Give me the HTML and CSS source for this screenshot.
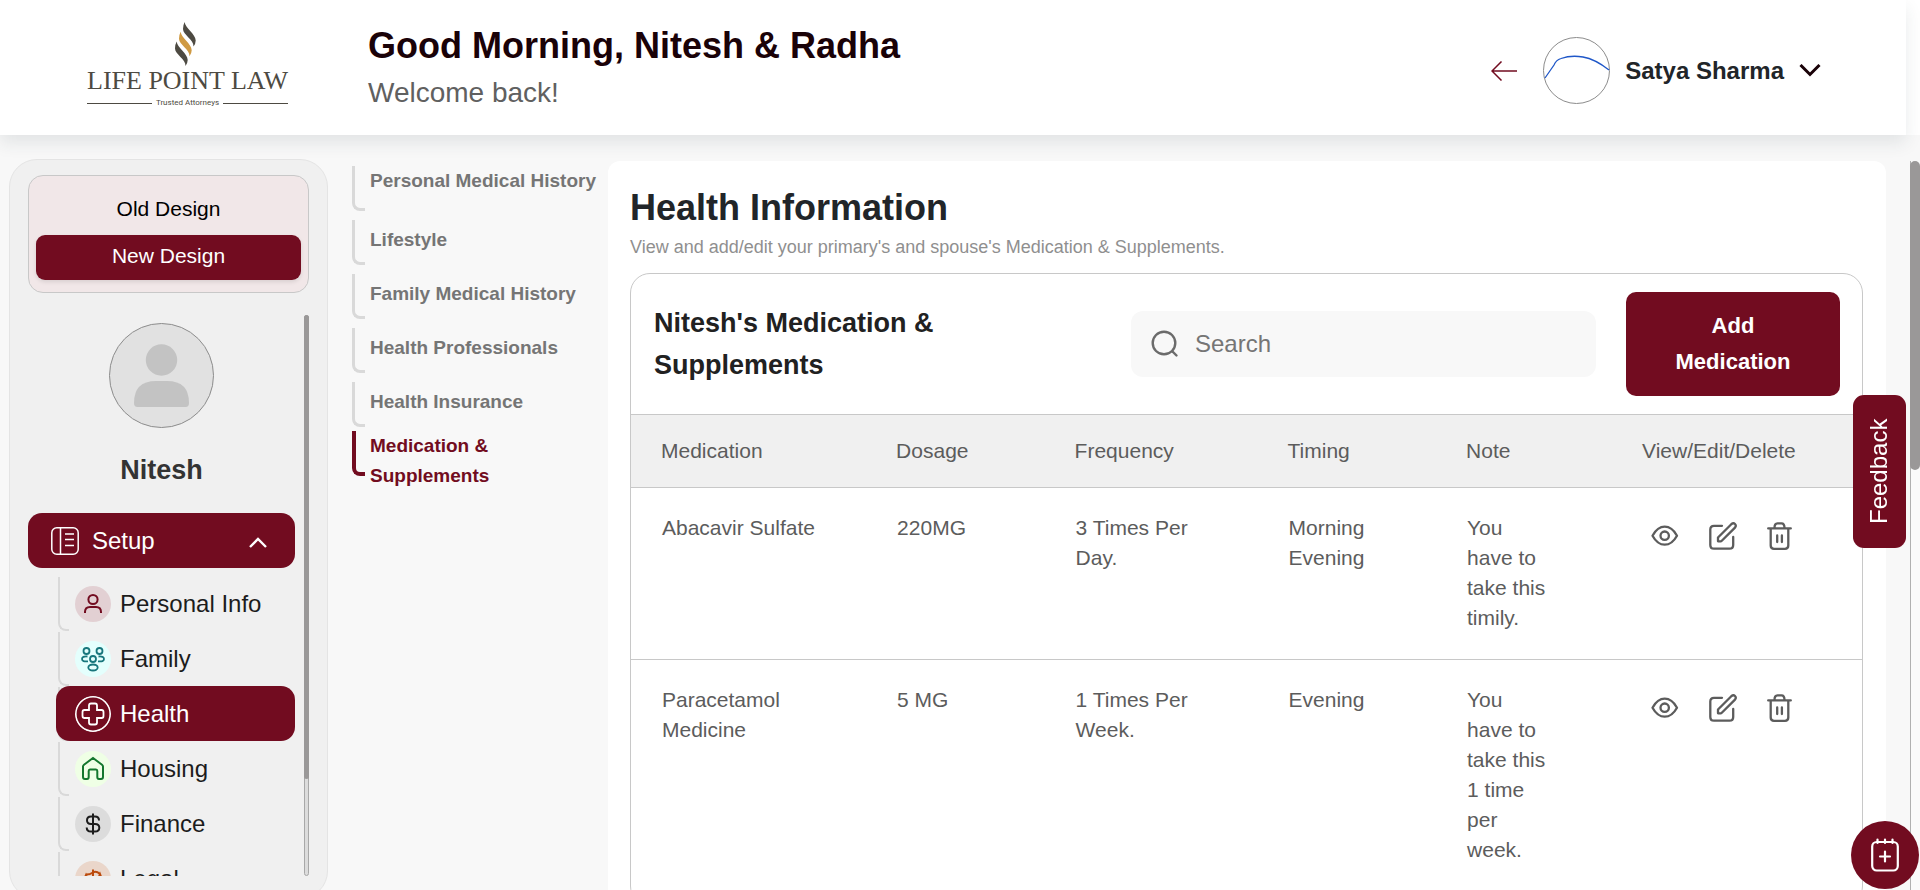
FILE: index.html
```html
<!DOCTYPE html>
<html lang="en">
<head>
<meta charset="utf-8">
<title>Health Information</title>
<link rel="stylesheet" href="styles.css">
</head>
<body>
<svg class="sprite" aria-hidden="true">
  <symbol id="eye" viewBox="0 0 28 28"><path d="M1.500 13.700C5 7.500 9.500 4.700 13.700 4.700S22.500 7.500 26 13.700C22.500 20 18 22.700 13.700 22.700S5 20 1.500 13.700Z"/><circle cx="13.700" cy="13.700" r="4.200"/></symbol>
  <symbol id="edit" viewBox="0 0 28 28"><path d="M13 3.800H5Q1.300 3.800 1.300 7.500V23Q1.300 26.700 5 26.700H20.500Q24.200 26.700 24.200 23V15"/><path d="M9 19.300V15.500L22.300 2.200Q24.400 .400 26 2T26 5.600L12.800 18.800Q12.300 19.300 11.600 19.300Z"/></symbol>
  <symbol id="trash" viewBox="0 0 28 28"><path d="M1.200 6.400H23.800M7.500 6Q7.500 1.300 10.500 1.300H14.500Q17.500 1.300 17.500 6M3.700 6.400V23.500Q3.700 26.800 7 26.800H18Q21.300 26.800 21.300 23.500V6.400M10.200 13.500V20M14.900 13.500V20"/></symbol>
</svg>

<header class="topbar">
  <a class="logo" href="#" aria-label="Life Point Law home">
    <svg class="logo-mark" viewBox="0 0 22 44" aria-hidden="true">
      <path fill="#4d4a42" d="M9.700 0C10 6 20.600 12 20.700 18.500Q20.700 21.500 18.500 24.500C19 17.500 8 13 8 7Q8 3 9.700 0Z"/>
      <path fill="#cf9a43" d="M5.700 9.700C6 15.700 16.600 21.700 16.700 28.200Q16.700 31.200 14.500 34.200C15 27.200 4 22.700 4 16.700Q4 12.700 5.700 9.700Z"/>
      <path fill="#4d4a42" d="M1.700 19.500C2 25.500 12.600 31.500 12.700 38Q12.700 41 10.500 44C11 37 0 32.500 0 26.500Q0 22.500 1.700 19.500Z"/>
    </svg>
    <span class="logo-name">LIFE POINT LAW</span>
    <span class="logo-tag">Trusted Attorneys</span>
  </a>
  <div class="greeting">
    <h1 class="greeting-title">Good Morning, Nitesh &amp; Radha</h1>
    <p class="greeting-text">Welcome back!</p>
  </div>
  <div class="account">
    <button class="plain" type="button" aria-label="Back">
      <svg width="26" height="20" viewBox="0 0 26 20" fill="none" stroke="#720c20" stroke-width="1.500"><path d="M26 10H1.500M10.500 .500L1 10L10.500 19.500"/></svg>
    </button>
    <button class="plain profile" type="button">
      <svg class="profile-photo" viewBox="0 0 67 67" aria-hidden="true"><circle cx="33.500" cy="33.500" r="33" fill="#fff" stroke="#8c8c8c"/><path d="M2 41L11 28Q13 23 18 21.500Q28 18 40 20T66 33" fill="none" stroke="#1f57c8" stroke-width="1.300"/></svg>
      <span class="profile-name">Satya Sharma</span>
      <svg width="22" height="13" viewBox="0 0 22 13" fill="none" stroke="#1a0208" stroke-width="3" aria-hidden="true"><path d="M1.500 1L11 10.500L20.500 1"/></svg>
    </button>
  </div>
</header>

<main class="layout">
  <aside class="sidebar">
    <div class="switch">
      <button class="switch-option" type="button">Old Design</button>
      <button class="switch-option is-on" type="button">New Design</button>
    </div>
    <div class="sidebar-scroll">
      <div class="sidebar-content">
        <svg class="avatar" viewBox="0 0 105 105" aria-hidden="true"><circle cx="52.500" cy="52.500" r="52" fill="#e1e1e1" stroke="#8c8c8c"/><circle cx="52.500" cy="37" r="15.700" fill="#c3c3c3"/><path d="M25 80Q25 58 47 58H58Q80 58 80 80Q80 84 76.500 84H28.500Q25 84 25 80Z" fill="#c3c3c3"/></svg>
        <p class="person">Nitesh</p>
        <button class="setup" type="button" aria-expanded="true">
          <svg width="28" height="28" viewBox="0 0 28 28" fill="none" stroke="#fff" stroke-width="1.500" aria-hidden="true"><rect x=".800" y=".800" width="26.400" height="26.400" rx="5"/><path d="M9.500 1V27M14 7H23M14 12.500H23M14 18.500H23"/></svg>
          <span>Setup</span>
          <svg class="setup-arrow" width="18" height="11" viewBox="0 0 18 11" fill="none" stroke="#fff" stroke-width="2.400" aria-hidden="true"><path d="M1 10L9 2L17 10"/></svg>
        </button>
        <nav>
          <ul class="menu">
            <li class="menu-item"><a class="menu-link" href="#"><svg class="menu-icon personal" viewBox="0 0 36 36" aria-hidden="true"><circle cx="18" cy="13.500" r="4.600"/><path d="M10 27V26Q10 21 15 21H21Q26 21 26 26V27"/></svg>Personal Info</a></li>
            <li class="menu-item"><a class="menu-link" href="#"><svg class="menu-icon family" viewBox="0 0 36 36" aria-hidden="true"><circle cx="11.500" cy="10" r="3"/><circle cx="24.500" cy="10" r="3"/><circle cx="18" cy="18" r="3"/><ellipse cx="18" cy="26.500" rx="4.700" ry="3"/><path d="M12.500 15.500Q7 15 7 18T13 20.300M23.500 15.500Q29 15 29 18T23 20.300"/></svg>Family</a></li>
            <li class="menu-item"><a class="menu-link is-current" href="#" aria-current="page"><svg class="menu-icon health" viewBox="0 0 36 36" aria-hidden="true"><circle cx="18" cy="18" r="17.300"/><path d="M16 7.500H20Q22 7.500 22 9.500V14H26.500Q28.500 14 28.500 16V20Q28.500 22 26.500 22H22V26.500Q22 28.500 20 28.500H16Q14 28.500 14 26.500V22H9.500Q7.500 22 7.500 20V16Q7.500 14 9.500 14H14V9.500Q14 7.500 16 7.500Z"/></svg>Health</a></li>
            <li class="menu-item"><a class="menu-link" href="#"><svg class="menu-icon housing" viewBox="0 0 36 36" aria-hidden="true"><path d="M8 15.500Q8 14.500 9 13.700L18 7L27 13.700Q28 14.500 28 15.500V26Q28 28 26 28H24Q22.300 28 22.300 26V20Q22.300 18.500 21 18.500H15Q13.700 18.500 13.700 20V26Q13.700 28 12 28H10Q8 28 8 26Z"/></svg>Housing</a></li>
            <li class="menu-item"><a class="menu-link" href="#"><svg class="menu-icon finance" viewBox="0 0 36 36" aria-hidden="true"><path d="M18 7.500V28.500M24 14.500Q24 10.500 20 10.500H16Q12 10.500 12 14.200T16 18H20Q24.300 18 24.300 21.800T20 25.600H16Q11.700 25.600 11.700 21.500"/></svg>Finance</a></li>
            <li class="menu-item"><a class="menu-link" href="#"><svg class="menu-icon legal" viewBox="0 0 36 36" aria-hidden="true"><path d="M18 8.500V27M11 13.500Q15 13.500 18 11.500T25 13M12 27H24M8 21L11 14L14 21ZM22 21L25 13L28 21Z"/></svg>Legal</a></li>
          </ul>
        </nav>
      </div>
      <div class="rail"><div class="rail-thumb"></div></div>
    </div>
  </aside>

  <nav class="sections" aria-label="Health sections">
    <ul class="section-list">
      <li class="section first"><a class="section-link" href="#">Personal Medical History</a></li>
      <li class="section"><a class="section-link" href="#">Lifestyle</a></li>
      <li class="section"><a class="section-link" href="#">Family Medical History</a></li>
      <li class="section"><a class="section-link" href="#">Health Professionals</a></li>
      <li class="section short"><a class="section-link" href="#">Health Insurance</a></li>
      <li class="section is-open"><a class="section-link" href="#" aria-current="page">Medication &amp;<br>Supplements</a></li>
    </ul>
  </nav>

  <section class="panel">
    <h2 class="panel-title">Health Information</h2>
    <p class="panel-text">View and add/edit your primary's and spouse's Medication &amp; Supplements.</p>
    <div class="card">
      <div class="card-head">
        <h3 class="card-title">Nitesh's Medication &amp; Supplements</h3>
        <label class="search">
          <svg width="28" height="28" viewBox="0 0 28 28" fill="none" stroke="#6b6b6b" stroke-width="2.400" stroke-linecap="round" aria-hidden="true"><circle cx="13" cy="13" r="11.300"/><path d="M21.500 21.500L25.500 25.500"/></svg>
          <input class="search-input" type="text" placeholder="Search" aria-label="Search">
        </label>
        <button class="add" type="button">Add Medication</button>
      </div>
      <table class="meds">
        <colgroup><col class="c-name"><col class="c-dose"><col class="c-freq"><col class="c-time"><col class="c-note"><col></colgroup>
        <thead><tr><th>Medication</th><th>Dosage</th><th>Frequency</th><th>Timing</th><th>Note</th><th>View/Edit/Delete</th></tr></thead>
        <tbody>
          <tr>
            <td>Abacavir Sulfate</td><td>220MG</td><td>3 Times Per Day.</td><td>Morning Evening</td><td class="note">You have to take this timily.</td>
            <td><div class="actions"><button class="plain" type="button" aria-label="View"><svg class="act"><use href="#eye"/></svg></button><button class="plain" type="button" aria-label="Edit"><svg class="act"><use href="#edit"/></svg></button><button class="plain" type="button" aria-label="Delete"><svg class="act"><use href="#trash"/></svg></button></div></td>
          </tr>
          <tr>
            <td>Paracetamol Medicine</td><td>5 MG</td><td>1 Times Per Week.</td><td>Evening</td><td class="note">You have to take this 1 time per week.</td>
            <td><div class="actions"><button class="plain" type="button" aria-label="View"><svg class="act"><use href="#eye"/></svg></button><button class="plain" type="button" aria-label="Edit"><svg class="act"><use href="#edit"/></svg></button><button class="plain" type="button" aria-label="Delete"><svg class="act"><use href="#trash"/></svg></button></div></td>
          </tr>
        </tbody>
      </table>
    </div>
  </section>
  <div class="page-rail"><div class="page-thumb"></div></div>
</main>

<button class="feedback" type="button">Feedback</button>
<button class="fab" type="button" aria-label="Add event">
  <svg width="28" height="34" viewBox="0 0 28 34" fill="none" stroke="#fff" stroke-width="2.200" stroke-linecap="round"><rect x="1.200" y="4" width="25.600" height="28.500" rx="4.500"/><path d="M6.500 1.500V5M14 1.500V5M21.500 1.500V5M14 13.500V23.500M9 18.500H19"/></svg>
</button>
</body>
</html>
```
FILE: styles.css
```css
*, *::before, *::after { box-sizing: border-box; }
body {
  margin: 0;
  height: 100vh;
  overflow: hidden;
  display: flex;
  flex-direction: column;
  background: #fff;
  color: #212529;
  font-family: "Liberation Sans", Arial, sans-serif;
}
h1, h2, h3, p, ul { margin: 0; padding: 0; }
ul { list-style: none; }
a { color: inherit; text-decoration: none; }
button { font-family: inherit; border: 0; cursor: pointer; }
svg { display: block; flex: none; }
.sprite { position: absolute; width: 0; height: 0; }
.plain { padding: 0; background: none; color: inherit; }

.topbar {
  position: relative;
  z-index: 2;
  flex: none;
  display: flex;
  align-items: flex-start;
  height: 135px;
  margin-right: 14px;
  padding-right: 85px;
  background: #fff;
  box-shadow: 0 8px 16px rgba(40, 60, 65, 0.1);
}
.logo {
  display: flex;
  flex-direction: column;
  width: 201px;
  margin: 22px 80px 0 87px;
  color: #4d4a42;
}
.logo-mark { width: 22px; height: 44px; align-self: center; margin-right: 4px; }
.logo-name { font: 26px/30px "Liberation Serif", serif; white-space: nowrap; }
.logo-tag {
  display: flex;
  align-items: center;
  gap: 4px;
  font: 8px/14px Roboto, sans-serif;
  white-space: nowrap;
}
.logo-tag::before, .logo-tag::after { content: ""; flex: 1; height: 1px; background: #4d4a42; }
.greeting { flex: 1; padding-top: 24px; }
.greeting-title { font-size: 36px; line-height: 44px; color: #1a0208; }
.greeting-text { font-size: 28px; line-height: 50px; color: #606060; }
.account { display: flex; align-items: center; gap: 26px; padding-top: 37px; }
.profile { display: flex; align-items: center; gap: 15px; }
.profile-photo { width: 67px; height: 67px; }
.profile-name { font-size: 24px; font-weight: 700; line-height: 36px; }

.layout { flex: 1; min-height: 0; overflow: hidden; display: flex; align-items: flex-start; background: #f8f8f8; }

.sidebar {
  flex: 0 0 319px;
  margin: 24px 24px 0 9px;
  padding: 15px 18px 22px;
  background: #f0f0f0;
  border: 1px solid #e4e4e4;
  border-radius: 28px;
}
.switch {
  display: flex;
  flex-direction: column;
  gap: 2px;
  padding: 12px 7px;
  background: #f1e7e8;
  border: 1px solid #c8c8c8;
  border-radius: 15px;
}
.switch-option { height: 45px; padding: 0 0 3px; border-radius: 9px; background: none; font-size: 21px; color: #000; }
.switch-option.is-on { background: #720c20; color: #fff; box-shadow: 0 2px 4px rgba(0, 0, 0, 0.1); }
.sidebar-scroll { display: flex; gap: 9px; height: calc(100vh - 329px); margin-top: 22px; }
.sidebar-content { flex: 1; overflow: hidden; padding-top: 8px; }
.rail { flex: 0 0 5px; border: 1px solid #a8a8a8; border-radius: 3px; background: #dcdcdc; }
.rail-thumb { height: 83%; margin: -1px; border-radius: 3px; background: #9a9898; }
.avatar { width: 105px; height: 105px; margin: 0 auto; }
.person { margin: 21px 0 22px; text-align: center; font-size: 27px; font-weight: 700; line-height: 42px; color: #333; }
.setup {
  display: flex;
  align-items: center;
  gap: 13px;
  width: 100%;
  height: 55px;
  margin-bottom: 8px;
  padding: 0 28px 0 23px;
  border-radius: 14px;
  background: #720c20;
  color: #fff;
  font-size: 24px;
}
.setup-arrow { margin: 4px 0 0 auto; }
.menu { margin-left: 28px; }
.menu-item { position: relative; }
.menu-item::before {
  content: "";
  position: absolute;
  left: 2px;
  top: 1px;
  width: 11px;
  height: 54px;
  border: solid #d9d9d9;
  border-width: 0 0 2px 2px;
  border-bottom-left-radius: 8px;
}
.menu-link {
  position: relative;
  display: flex;
  align-items: center;
  gap: 9px;
  height: 55px;
  padding-left: 19px;
  border-radius: 14px;
  font-size: 24px;
  color: #1c1c1c;
}
.menu-link.is-current { background: #720c20; color: #fff; }
.menu-icon { width: 36px; height: 36px; border-radius: 50%; fill: none; stroke-width: 2; }
.personal { background: #e2d0d3; stroke: #720c20; }
.family { background: #e4fffd; stroke: #17767c; stroke-width: 1.8; }
.health { stroke: #fff; stroke-width: 1.8; }
.housing { background: #efffe5; stroke: #14772d; }
.finance { background: #dcdcdc; stroke: #1c1c1c; }
.legal { background: #ead6ca; stroke: #bb4a0c; }

.sections { flex: 0 0 256px; padding-top: 31px; }
.section-list { display: flex; flex-direction: column; gap: 9px; }
.section { position: relative; min-height: 45px; padding: 5px 0 0 18px; }
.section.first, .section.is-open { padding-top: 0; }
.section.short { min-height: 40px; }
.section::before {
  content: "";
  position: absolute;
  left: 0;
  top: 0;
  width: 13px;
  height: 45px;
  border: solid #d9d9d9;
  border-width: 0 0 3px 3px;
  border-bottom-left-radius: 8px;
}
.section.is-open::before { border-width: 0 0 4px 4px; border-color: #720c20; }
.section-link { display: block; font-size: 19px; font-weight: 700; line-height: 30px; color: #757575; white-space: nowrap; }
.section.is-open .section-link { color: #720c20; }

.panel { flex: 1; min-width: 0; margin: 26px 24px 0 0; padding: 25px 23px 40px 22px; background: #fff; border-radius: 12px; }
.panel-title { font-size: 36px; line-height: 44px; }
.panel-text { font-size: 18px; line-height: 34px; color: #8f8f8f; }
.card { margin-top: 9px; border: 1px solid #c8c8c8; border-radius: 20px; overflow: hidden; }
.card-head { display: flex; align-items: center; padding: 18px 22px 18px 23px; }
.card-title { flex: 1; padding-right: 180px; font-size: 27px; line-height: 42px; color: #212121; }
.search {
  display: flex;
  align-items: center;
  gap: 16px;
  flex: 0 1 465px;
  height: 66px;
  margin-right: 30px;
  padding: 0 20px;
  border-radius: 12px;
  background: #f8f8f8;
}
.search-input { flex: 1; min-width: 0; padding: 0; border: 0; outline: 0; background: none; font: 24px "Liberation Sans", Arial, sans-serif; }
.search-input::placeholder { color: #757575; opacity: 1; }
.add { flex: 0 0 214px; height: 104px; padding: 0 40px; border-radius: 10px; background: #720c20; color: #fff; font-size: 22px; font-weight: 700; line-height: 36px; }
.meds { width: 100%; table-layout: fixed; border-collapse: collapse; font-size: 21px; line-height: 30px; color: #5c5c5c; }
.c-name { width: 19.1%; }
.c-dose { width: 14.5%; }
.c-freq { width: 17.3%; }
.c-time { width: 14.5%; }
.c-note { width: 14.3%; }
.meds th { padding: 21px 30px; text-align: left; font-weight: 400; background: #f0f0f0; border: solid #c8c8c8; border-width: 1px 0; white-space: nowrap; }
.meds td { padding: 25px 30px 26px 31px; vertical-align: top; border-bottom: 1px solid #c8c8c8; }
.meds td.note { padding-right: 62px; }
.meds tr:last-child td { padding-bottom: 40px; border-bottom: 0; }
.actions { display: flex; gap: 30px; padding: 9px 8px; }
.act { width: 28px; height: 28px; fill: none; stroke: #5c5c5c; stroke-width: 2.3; stroke-linecap: round; stroke-linejoin: round; }

.page-rail { flex: 0 0 10px; align-self: stretch; margin-top: 26px; border-left: 1px solid #b0b0b0; background: #fafafa; }
.page-thumb { height: 309px; margin-left: -1px; border-radius: 6px; background: #9a9898; }

.feedback {
  position: fixed;
  z-index: 3;
  right: 14px;
  top: 395px;
  width: 53px;
  height: 153px;
  padding: 0;
  border-radius: 11px;
  background: #720c20;
  color: #fff;
  font-size: 24px;
  writing-mode: vertical-rl;
  transform: rotate(180deg);
}
.fab {
  position: fixed;
  z-index: 3;
  right: 1px;
  bottom: 1px;
  display: grid;
  place-items: center;
  width: 68px;
  height: 68px;
  padding: 0;
  border-radius: 50%;
  background: #720c20;
}
```
